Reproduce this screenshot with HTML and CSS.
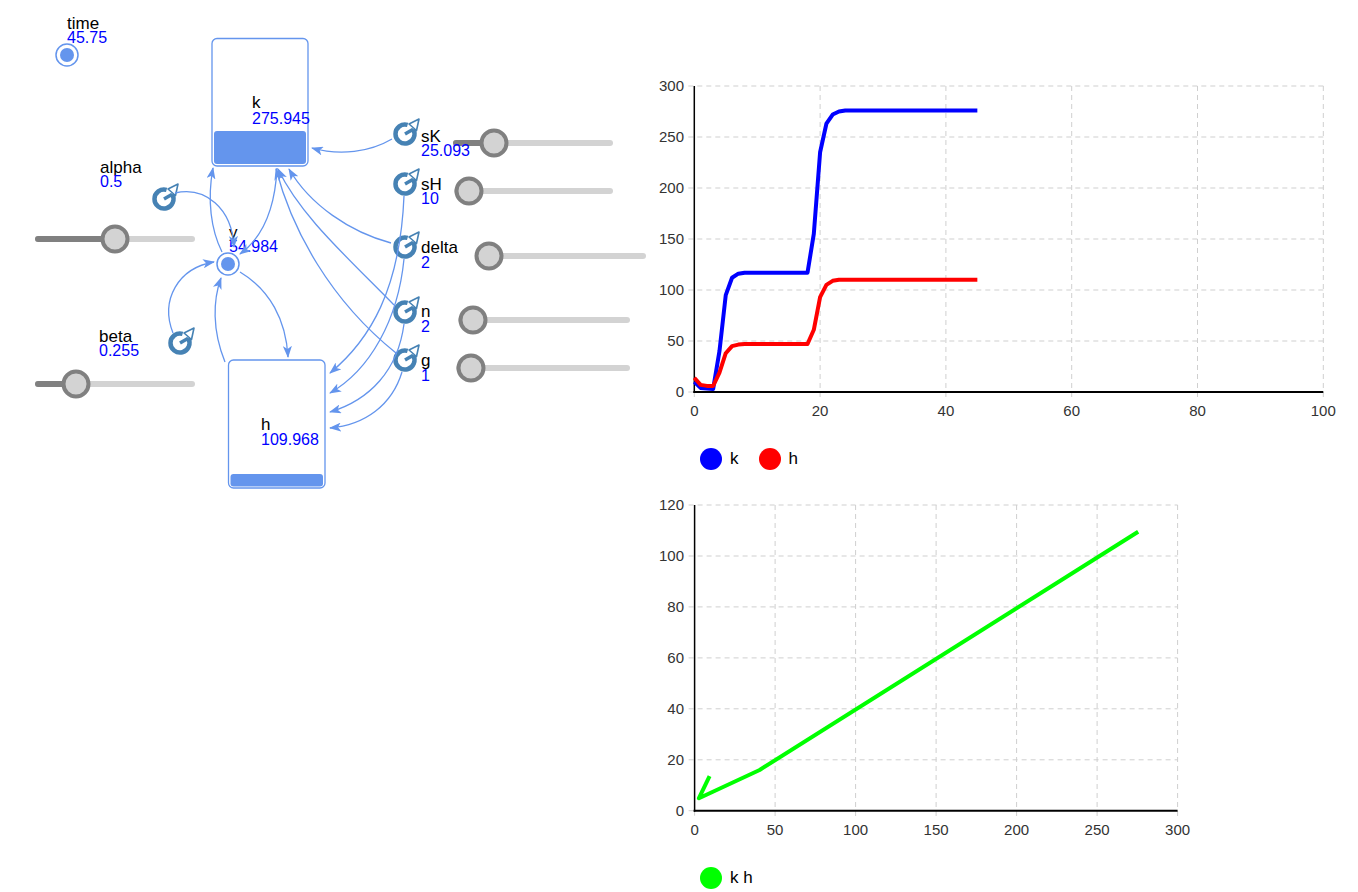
FILE: index.html
```html
<!DOCTYPE html>
<html>
	<head>
		<meta charset="utf-8">
		<title>Model</title>
		<link rel="stylesheet" href="styles.css">
	</head>
	<body>
		<div class="page">
			<div class="model">
				<svg class="diagram" width="650" height="500" viewBox="0 0 650 500">
					<defs>
						<marker id="arrow" viewBox="0 0 12 9" refX="11" refY="4.5" markerWidth="12" markerHeight="9" markerUnits="userSpaceOnUse" orient="auto">
							<path d="M0,0 L12,4.5 L0,9 L3,4.5 Z" fill="#6495ed"/>
						</marker>
						<symbol id="aux" viewBox="-14 -14 28 28" overflow="visible">
							<path d="M8.2,-4.75 A9.5,9.5 0 1 1 2.6,-9.1" fill="none" stroke="#4682b4" stroke-width="4.5"/>
							<path d="M0,0 L8.2,-4.75" stroke="#4682b4" stroke-width="3.5"/>
							<path d="M4,-10 L14,-15 L11.5,-3.5 Z" fill="#fff" stroke="#4682b4" stroke-width="1.6" stroke-linejoin="round"/>
						</symbol>
					</defs>

					<!-- sliders -->
					<g>
						<line class="track" x1="38" y1="239" x2="192" y2="239"/>
						<line class="track-fill" x1="38" y1="239" x2="115" y2="239"/>
						<circle class="thumb" cx="115" cy="239" r="12.5"/>

						<line class="track" x1="38" y1="384" x2="192" y2="384"/>
						<line class="track-fill" x1="38" y1="384" x2="76" y2="384"/>
						<circle class="thumb" cx="76" cy="384" r="12.5"/>

						<line class="track" x1="456" y1="143" x2="610" y2="143"/>
						<line class="track-fill" x1="456" y1="143" x2="494" y2="143"/>
						<circle class="thumb" cx="494" cy="143" r="12.5"/>

						<line class="track" x1="457" y1="191" x2="610" y2="191"/>
						<circle class="thumb" cx="469" cy="191" r="12.5"/>

						<line class="track" x1="478" y1="256" x2="643" y2="256"/>
						<circle class="thumb" cx="489" cy="256" r="12.5"/>

						<line class="track" x1="461" y1="320" x2="627" y2="320"/>
						<circle class="thumb" cx="473" cy="320" r="12.5"/>

						<line class="track" x1="459" y1="368" x2="627" y2="368"/>
						<circle class="thumb" cx="471" cy="368" r="12.5"/>
					</g>

					<!-- stocks -->
					<rect class="stock" x="212" y="38.5" width="96" height="127.5" rx="5"/>
					<rect class="level" x="214" y="131" width="92" height="33" rx="3"/>
					<rect class="stock" x="228.5" y="360" width="96.5" height="128" rx="5"/>
					<rect class="level" x="230.5" y="474" width="92.5" height="12.5" rx="3"/>

					<!-- variables -->
					<circle class="var-ring" cx="67" cy="55" r="11"/>
					<circle class="var-dot" cx="67" cy="55" r="7"/>
					<circle class="var-ring" cx="228" cy="264" r="11"/>
					<circle class="var-dot" cx="228" cy="264" r="7"/>

					<!-- converters -->
					<use href="#aux" x="150" y="185" width="28" height="28"/>
					<use href="#aux" x="166" y="329" width="28" height="28"/>
					<use href="#aux" x="391" y="120" width="28" height="28"/>
					<use href="#aux" x="391" y="170" width="28" height="28"/>
					<use href="#aux" x="391" y="233" width="28" height="28"/>
					<use href="#aux" x="391" y="298" width="28" height="28"/>
					<use href="#aux" x="391" y="346" width="28" height="28"/>

					<!-- labels -->
					<text class="name" x="67" y="29">time</text>
					<text class="value" x="67" y="43">45.75</text>
					<text class="name" x="252" y="108">k</text>
					<text class="value" x="252" y="124">275.945</text>
					<text class="name" x="100" y="173">alpha</text>
					<text class="value" x="100" y="187">0.5</text>
					<text class="name" x="99" y="342">beta</text>
					<text class="value" x="99" y="356">0.255</text>
					<text class="name" x="229" y="238">y</text>
					<text class="value" x="229" y="252">54.984</text>
					<text class="name" x="261" y="430">h</text>
					<text class="value" x="261" y="445">109.968</text>
					<text class="name" x="421" y="142">sK</text>
					<text class="value" x="421" y="156">25.093</text>
					<text class="name" x="421" y="190">sH</text>
					<text class="value" x="421" y="204">10</text>
					<text class="name" x="421" y="253">delta</text>
					<text class="value" x="421" y="268">2</text>
					<text class="name" x="421" y="317">n</text>
					<text class="value" x="421" y="332">2</text>
					<text class="value" x="421" y="381">1</text>
					<text class="name" x="421" y="366">g</text>

					<!-- links -->
					<path class="link" d="M392,139 C370,152 340,156 312,148"/>
					<path class="link" d="M175,193 C205,186 232,208 234,247"/>
					<path class="link" d="M173,333 C160,300 178,268 214,262"/>
					<path class="link" d="M225,362 C212,330 213,300 221,278"/>
					<path class="link" d="M240,272 C270,290 286,320 288,357"/>
					<path class="link" d="M222,252 C211,230 207,200 213,168"/>
					<path class="link" d="M277,168 C275,210 262,238 240,254"/>
					<path class="link" d="M391,243 C350,232 310,205 289,169"/>
					<path class="link" d="M394,305 C345,255 300,215 278,169"/>
					<path class="link" d="M396,353 C330,300 292,230 276,169"/>
					<path class="link" d="M404,196 C400,290 370,340 330,373"/>
					<path class="link" d="M404,259 C398,320 370,370 330,393"/>
					<path class="link" d="M404,324 C398,370 370,400 330,412"/>
					<path class="link" d="M402,372 C392,405 365,425 330,428"/>
				</svg>
			</div>

			<div class="charts">
				<div class="chart">
					<svg class="plot" width="690" height="350" viewBox="0 0 690 350">
						<g class="grid">
							<line x1="170.1" y1="10" x2="170.1" y2="322"/>
							<line x1="295.9" y1="10" x2="295.9" y2="322"/>
							<line x1="421.7" y1="10" x2="421.7" y2="322"/>
							<line x1="547.5" y1="10" x2="547.5" y2="322"/>
							<line x1="673.3" y1="10" x2="673.3" y2="322"/>
							<line x1="44.3" y1="316" x2="44.3" y2="322"/>
							<line x1="38.3" y1="10" x2="673.3" y2="10"/>
							<line x1="38.3" y1="61" x2="673.3" y2="61"/>
							<line x1="38.3" y1="112" x2="673.3" y2="112"/>
							<line x1="38.3" y1="163" x2="673.3" y2="163"/>
							<line x1="38.3" y1="214" x2="673.3" y2="214"/>
							<line x1="38.3" y1="265" x2="673.3" y2="265"/>
							<line x1="38.3" y1="316" x2="44.3" y2="316"/>
						</g>
						<line class="axis axis-y" x1="44.3" y1="10" x2="44.3" y2="317"/>
						<line class="axis" x1="43.3" y1="316" x2="673.3" y2="316"/>
						<g class="tick tick-y">
							<text x="34" y="15">300</text>
							<text x="34" y="66">250</text>
							<text x="34" y="117">200</text>
							<text x="34" y="168">150</text>
							<text x="34" y="219">100</text>
							<text x="34" y="270">50</text>
							<text x="34" y="321">0</text>
						</g>
						<g class="tick tick-x">
							<text x="44.3" y="340">0</text>
							<text x="170.1" y="340">20</text>
							<text x="295.9" y="340">40</text>
							<text x="421.7" y="340">60</text>
							<text x="547.5" y="340">80</text>
							<text x="673.3" y="340">100</text>
						</g>
						<g transform="translate(44.3 316) scale(6.29 -1.02)">
							<polyline class="series series-k" points="0,10 1,4 2,3.5 3,3 4,40 5,95 6,112 7,116 8,117 18,117 19,155 20,235 21,263 22,272 23,275 24,276 45,276"/>
							<polyline class="series series-h" points="0,14 1,7 2,6 3,6 4,19 5,38 6,45 7,46.5 8,47 18,47 19,61 20,93 21,105 22,109 23,110 45,110"/>
						</g>
					</svg>
					<div class="legend">
						<span class="legend-item"><i class="swatch swatch-k"></i>k</span>
						<span class="legend-item"><i class="swatch swatch-h"></i>h</span>
					</div>
				</div>

				<div class="chart">
					<svg class="plot" width="690" height="350" viewBox="0 0 690 350">
						<g class="grid">
							<line x1="125.1" y1="10" x2="125.1" y2="321.7"/>
							<line x1="205.6" y1="10" x2="205.6" y2="321.7"/>
							<line x1="286.1" y1="10" x2="286.1" y2="321.7"/>
							<line x1="366.6" y1="10" x2="366.6" y2="321.7"/>
							<line x1="447.1" y1="10" x2="447.1" y2="321.7"/>
							<line x1="527.6" y1="10" x2="527.6" y2="321.7"/>
							<line x1="44.6" y1="315.7" x2="44.6" y2="321.7"/>
							<line x1="38.6" y1="10" x2="527.6" y2="10"/>
							<line x1="38.6" y1="61" x2="527.6" y2="61"/>
							<line x1="38.6" y1="111.9" x2="527.6" y2="111.9"/>
							<line x1="38.6" y1="162.9" x2="527.6" y2="162.9"/>
							<line x1="38.6" y1="213.8" x2="527.6" y2="213.8"/>
							<line x1="38.6" y1="264.8" x2="527.6" y2="264.8"/>
							<line x1="38.6" y1="315.7" x2="44.6" y2="315.7"/>
						</g>
						<line class="axis axis-y" x1="44.6" y1="10" x2="44.6" y2="316.7"/>
						<line class="axis" x1="43.6" y1="315.7" x2="527.6" y2="315.7"/>
						<g class="tick tick-y">
							<text x="34" y="15">120</text>
							<text x="34" y="66">100</text>
							<text x="34" y="116.9">80</text>
							<text x="34" y="167.9">60</text>
							<text x="34" y="218.8">40</text>
							<text x="34" y="269.8">20</text>
							<text x="34" y="320.7">0</text>
						</g>
						<g class="tick tick-x">
							<text x="44.6" y="340">0</text>
							<text x="125.1" y="340">50</text>
							<text x="205.6" y="340">100</text>
							<text x="286.1" y="340">150</text>
							<text x="366.6" y="340">200</text>
							<text x="447.1" y="340">250</text>
							<text x="527.6" y="340">300</text>
						</g>
						<g transform="translate(44.6 315.7) scale(1.61 -2.547)">
							<polyline class="series series-kh" points="9.3,13.6 2.7,4.9 40.4,16 275.5,109.5"/>
						</g>
					</svg>
					<div class="legend">
						<span class="legend-item"><i class="swatch swatch-kh"></i>k h</span>
					</div>
				</div>
			</div>
		</div>
	</body>
</html>
```

FILE: styles.css
```css
body{
	margin: 0;
	background: #fff;
	font-family: "Liberation Sans", Arial, sans-serif;
}
.page{
	display: flex;
	align-items: flex-start;
}
.model{
	width: 650px;
	flex: none;
}
.diagram{
	display: block;
}

/* diagram */
.track{
	stroke: #d3d3d3;
	stroke-width: 6;
	stroke-linecap: round;
}
.track-fill{
	stroke: #808080;
	stroke-width: 6;
	stroke-linecap: round;
}
.thumb{
	fill: #d3d3d3;
	stroke: #808080;
	stroke-width: 4;
}
.stock{
	fill: #fff;
	stroke: #6495ed;
	stroke-width: 1.3;
}
.level{
	fill: #6495ed;
}
.var-ring{
	fill: #fff;
	stroke: #6495ed;
	stroke-width: 1.5;
}
.var-dot{
	fill: #6495ed;
}
.name{
	font-size: 17px;
	fill: #000;
}
.value{
	font-size: 16px;
	fill: #0000ff;
}
.link{
	fill: none;
	stroke: #6495ed;
	stroke-width: 1.3;
	marker-end: url(#arrow);
}

/* charts */
.charts{
	display: flex;
	flex-direction: column;
	gap: 25px;
	padding-top: 76px;
}
.plot{
	display: block;
}
.grid line{
	stroke: #cfcfcf;
	stroke-width: 1;
	stroke-dasharray: 5 4;
}
.axis{
	stroke: #000;
	stroke-width: 2;
}
.axis-y{
	stroke-width: 1.5;
}
.tick text{
	font-size: 15px;
	fill: #333;
}
.tick-y text{
	text-anchor: end;
}
.tick-x text{
	text-anchor: middle;
}
.series{
	fill: none;
	stroke-width: 4;
	stroke-linejoin: round;
	vector-effect: non-scaling-stroke;
}
.series-k{
	stroke: #0000ff;
}
.series-h{
	stroke: #ff0000;
}
.series-kh{
	stroke: #00ff00;
}
.legend{
	display: flex;
	gap: 20px;
	margin-top: 22px;
	padding-left: 50px;
	font-size: 17px;
	line-height: 22px;
}
.legend-item{
	display: flex;
	align-items: center;
	gap: 8px;
}
.swatch{
	width: 22px;
	height: 22px;
	border-radius: 50%;
}
.swatch-k{
	background: #0000ff;
}
.swatch-h{
	background: #ff0000;
}
.swatch-kh{
	background: #00ff00;
}
```
